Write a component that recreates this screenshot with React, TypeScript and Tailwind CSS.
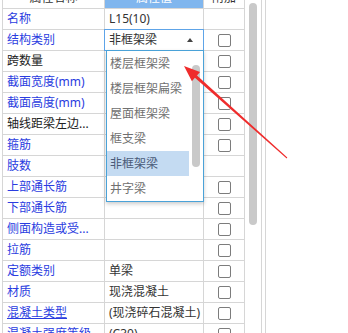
import React from "react";

type Row = {
  label: string;
  blue?: boolean;
  underline?: boolean;
  value?: string;
  check?: boolean;
  combo?: boolean;
};

const ROWS: Row[] = [
  { label: "名称", blue: true, value: "L15(10)" },
  { label: "结构类别", blue: true, value: "非框架梁", check: true, combo: true },
  { label: "跨数量", check: true },
  { label: "截面宽度(mm)", blue: true, check: true },
  { label: "截面高度(mm)", blue: true, check: true },
  { label: "轴线距梁左边...", check: true },
  { label: "箍筋", blue: true, check: true },
  { label: "肢数", blue: true },
  { label: "上部通长筋", blue: true, check: true },
  { label: "下部通长筋", blue: true, check: true },
  { label: "侧面构造或受...", blue: true, check: true },
  { label: "拉筋", blue: true, check: true },
  { label: "定额类别", blue: true, value: "单梁", check: true },
  { label: "材质", blue: true, value: "现浇混凝土", check: true },
  { label: "混凝土类型", blue: true, underline: true, value: "(现浇碎石混凝土)", check: true },
  { label: "混凝土强度等级", blue: true, value: "(C30)", check: true },
];

const OPTIONS = ["楼层框架梁", "楼层框架扁梁", "屋面框架梁", "框支梁", "非框架梁", "井字梁"];

function Checkbox() {
  return <div className="w-[13px] h-[13px] rounded-[2px] border border-[#7c7c7c] bg-white" />;
}

export default function App() {
  return (
    <div className="relative w-[348px] h-[333px] overflow-hidden bg-white text-[12px] font-['Noto_Sans','Noto_Sans_CJK_SC',sans-serif]">
      <div className="flex">
        {/* property grid */}
        <div className="ml-[2px] -mt-[12px] w-[243px] border-l border-[#d6d6d6]">
          <div className="flex h-[21px] border-b border-[#d6d6d6]">
            <div className="w-[102px] border-r border-[#d6d6d6] flex items-center justify-center text-[#333]">
              属性名称
            </div>
            <div className="w-[99px] border-r border-[#d6d6d6] bg-[#80b6ee] flex items-center justify-center text-white">
              属性值
            </div>
            <div className="w-[41px] border-r border-[#d6d6d6] flex items-center justify-center text-[#333]">
              附加
            </div>
          </div>
          {ROWS.map((r) => (
            <div key={r.label} className="flex h-[21px] border-b border-[#d6d6d6]">
              <div
                className={`w-[102px] border-r border-[#d6d6d6] flex items-center pl-[4px] whitespace-nowrap overflow-hidden ${
                  r.blue ? "text-[#2a3ce0]" : "text-[#222]"
                } ${r.underline ? "underline" : ""}`}
              >
                {r.label}
              </div>
              <div className="relative w-[99px] border-r border-[#d6d6d6] flex items-center pl-[4px] text-[#333] whitespace-nowrap">
                {r.value}
                {r.combo && (
                  <div className="absolute -top-px -left-px -right-px -bottom-px border border-[#5ea4e8] flex items-center justify-end pr-[10px]">
                    <svg width="6" height="4" viewBox="0 0 6 4">
                      <path d="M0 4 L3 0 L6 4 Z" fill="#444" />
                    </svg>
                  </div>
                )}
              </div>
              <div className="w-[41px] border-r border-[#d6d6d6] flex items-center justify-center">
                {r.check && <Checkbox />}
              </div>
            </div>
          ))}
        </div>

        {/* outer scrollbar */}
        <div className="w-[16px] h-[333px] pl-[4px] pt-[3px]">
          <div className="w-[8px] h-[222px] rounded-full bg-[#c9c9c9]" />
        </div>
        <div className="w-[5px] h-[333px] border-l border-r border-[#d6d6d6]" />
      </div>

      {/* dropdown list */}
      <div className="absolute left-[106px] top-[50px] w-[98px] border border-[#4aa2d8] bg-white shadow-[0_2px_4px_rgba(0,0,0,0.2)] flex">
        <div className="flex-1">
          {OPTIONS.map((o) => (
            <div
              key={o}
              className={`h-[25px] flex items-center pl-[3px] whitespace-nowrap ${
                o === "非框架梁" ? "bg-[#c4dbf2] text-[#4a5a78]" : "text-[#707070]"
              }`}
            >
              {o}
            </div>
          ))}
        </div>
        <div className="w-[14px] pt-[14px] pl-[3px]">
          <div className="w-[8px] h-[102px] rounded-full bg-[#c9c9c9]" />
        </div>
      </div>

      {/* red annotation arrow */}
      <svg className="absolute inset-0 pointer-events-none" width="348" height="333">
        <polygon
          points="184,66 200,72 197,75.6 287.3,157.6 286.7,158.4 194.9,77.8 191.9,81.2"
          fill="#ef2c2c"
        />
      </svg>
    </div>
  );
}
